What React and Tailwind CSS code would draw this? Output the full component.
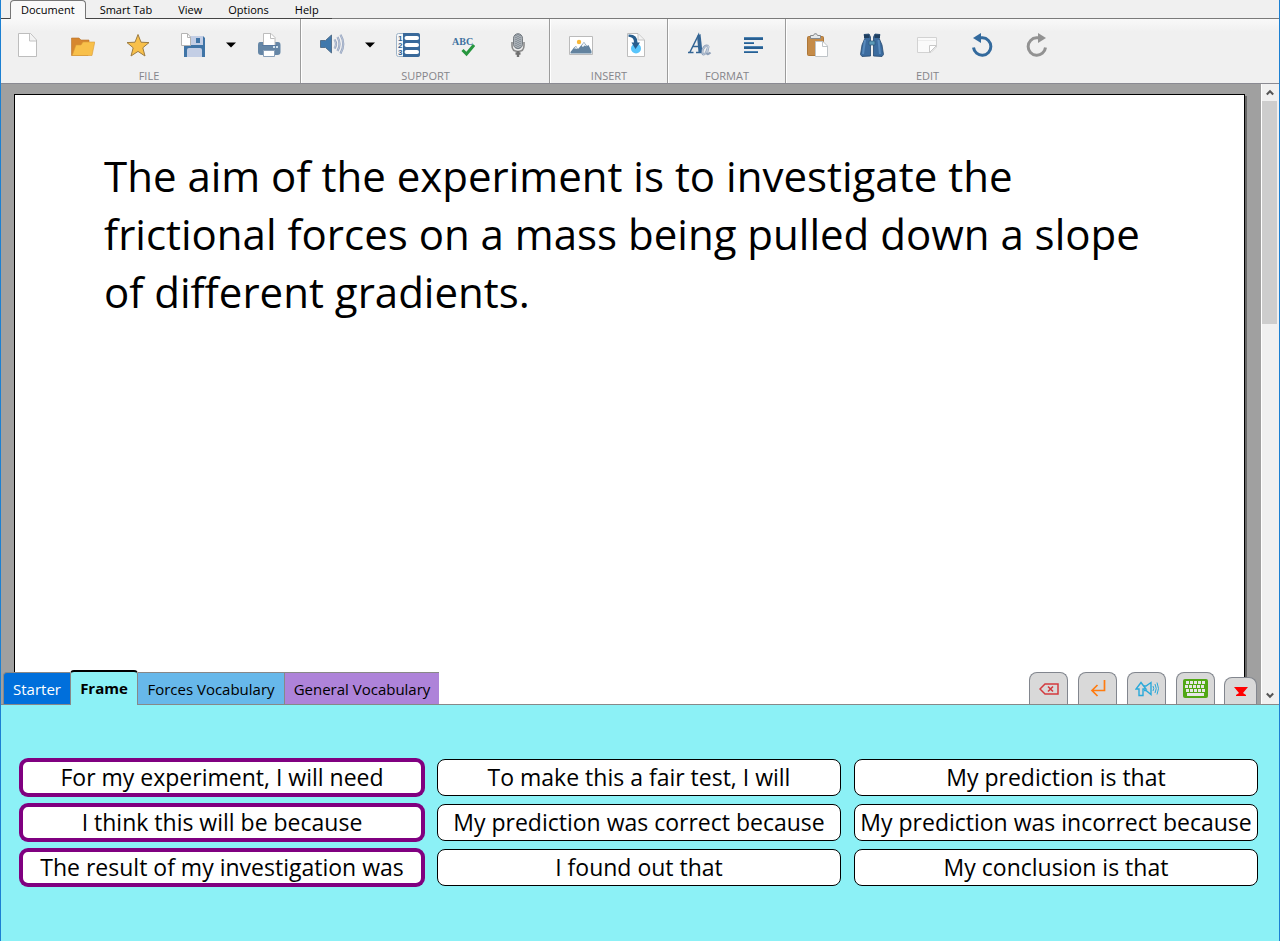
const menus = ["Smart Tab", "View", "Options", "Help"];

const Svg = ({ children }) => (
  <svg width="24" height="24" viewBox="0 0 24 24" aria-hidden="true" fill="none">{children}</svg>
);

const NewIcon = () => (
  <Svg>
    <path d="M2.5.5H14.5L20.5 7V23.5H2.5Z" fill="#fff" stroke="#bdbdbd" />
    <path d="M13.5 1V8H20" fill="#f2f2f2" stroke="#c4c4c4" />
  </Svg>
);
const OpenIcon = () => (
  <Svg>
    <path d="M.5 5H8L10 7H18V12L17 22.5H.5Z" fill="#d6872f" stroke="#b8722a" strokeWidth=".6" />
    <path d="M5 12H10L12 9H23.8L21 22.5H1.2Z" fill="#f8c04a" stroke="#d99a35" strokeWidth=".6" />
  </Svg>
);
const StarIcon = () => (
  <Svg>
    <path d="M12 1.5L15 9.2L23 9.6L16.8 14.8L19 23L12 18.4L5 23L7.2 14.8L1 9.6L9 9.2Z" fill="#f8c04a" stroke="#9d7c42" strokeLinejoin="round" />
  </Svg>
);
const SaveIcon = () => (
  <Svg>
    <path d="M3 3H22L24 5V24H3Z" fill="#3f74a6" />
    <path d="M9 3H22V12H9Z" fill="#c3cee5" />
    <path d="M15 5H19V10H15Z" fill="#3f74a6" />
    <path d="M6 24V17Q6 15 8 15H19Q21 15 21 17V24Z" fill="#c3cee5" />
    <path d="M.5.5H6.5L9.5 4V12.5H.5Z" fill="#fff" stroke="#b4b4b4" />
    <path d="M6.5 1V4.5H9.5" stroke="#b4b4b4" />
  </Svg>
);
const PrintIcon = () => (
  <Svg>
    <path d="M3 9H21Q23.5 9 23.5 12V19Q23.5 22 20.5 22H4Q1 22 1 19V12Q1 9 3 9Z" fill="#6586a6" />
    <path d="M6.5 12.5V.5H14L18 4.5V12.5Z" fill="#fff" stroke="#bcbcbc" />
    <path d="M13.5 1V5.500H17.5" stroke="#bcbcbc" />
    <path d="M5 12.5H20" stroke="#5879a0" />
    <path d="M6.5 17.5H17.5V23.5H6.5Z" fill="#fff" stroke="#8aa0b8" />
    <path d="M16 13H18V15H16ZM19 13H21V15H19Z" fill="#d2e2ee" />
  </Svg>
);
const SoundIcon = () => (
  <svg width="26" height="24" viewBox="0 0 26 24" aria-hidden="true" fill="none">
    <path d="M1.5 7.5H6.5L12.500 2V20L6.5 14.5H1.5Z" fill="#3f78ac" stroke="#54708c" />
    <path d="M15.500 6.5Q18.500 11 15.500 15.5M18.500 4Q22.500 11 18.500 18M21.500 1.8Q27 11 21.500 20.5" stroke="#94a2bd" strokeWidth="2.200" />
    <path d="M15.500 6.5Q18.500 11 15.500 15.5M18.500 4Q22.500 11 18.500 18M21.500 1.8Q27 11 21.500 20.5" stroke="#c4cede" strokeWidth=".8" />
  </svg>
);
const ListIcon = () => (
  <Svg>
    <rect x=".5" y=".5" width="23" height="23" rx="2" fill="#f4f7f9" stroke="#9fb4c8" />
    <path d="M7 0H22Q24 0 24 2V22Q24 24 22 24H7Z" fill="#39699a" />
    <path d="M10.5 5H21M10.5 12H21M10.5 19H21" stroke="#fff" strokeWidth="4" strokeLinecap="round" />
    <g fill="#315f8e" fontFamily="Liberation Sans" fontSize="8" fontWeight="700">
      <text x="2" y="8">1</text><text x="2" y="15">2</text><text x="2" y="22">3</text>
    </g>
  </Svg>
);
const SpellIcon = () => (
  <Svg>
    <text x="1" y="12" fill="#40719f" fontFamily="Liberation Serif" fontSize="10" fontWeight="700">ABC</text>
    <path d="M11.500 17L15.500 21L23 12" stroke="#27963e" strokeWidth="3" />
  </Svg>
);
const MicIcon = () => (
  <Svg>
    <rect x="7.500" y=".7" width="9" height="15" rx="4.5" fill="#a9afb5" stroke="#747a80" />
    <path d="M10 2V15M12 1V16M14 2V15" stroke="#6f7a84" strokeDasharray="1 1" />
    <path d="M6 9V12.500Q6 18.500 12 18.500T18 12.500V9" stroke="#8a8a8a" strokeWidth="1.6" />
    <path d="M12 18V24M9.500 20.5H14.500" stroke="#707070" strokeWidth="2.4" />
  </Svg>
);
const PictureIcon = () => (
  <Svg>
    <path d="M.5 3.5H23.5V21.5H.5Z" fill="#fff" stroke="#bbb" />
    <circle cx="10" cy="9" r="2.2" fill="#f9b838" />
    <path d="M1.5 20.5V19L5 14.5L7 13L9 16L15 9L18 13L19.5 12L22.5 18V20.5Z" fill="#63839f" />
    <path d="M5 15.5L7 13.5L8.5 16L6.5 15.5ZM12.5 13L15 9.5L17.5 13.5L15.5 12.5L14 14Z" fill="#f4f8fb" />
  </Svg>
);
const InsertIcon = () => (
  <Svg>
    <path d="M3.5.5H14L20.5 7V23.5H3.5Z" fill="#fff" stroke="#bdbdbd" />
    <path d="M14 1V7H20" fill="#f2f2f2" stroke="#c4c4c4" />
    <circle cx="12" cy="15.5" r="5" fill="#58c5fb" />
    <path d="M4.5 1.5Q13.5 1 13.5 9.5H16L11.5 16L7.5 9.5H10Q10 4 4.5 3.8Z" fill="#285e8e" />
  </Svg>
);
const FontIcon = () => (
  <svg width="28" height="28" viewBox="0 0 28 28" aria-hidden="true" fill="none">
    <path d="M3 21.500H8.500M11 21.500H17.500M15 21L13.500 4L5 21M7.500 15.500H14" stroke="#346594" strokeWidth="1.500" />
    <path d="M12 5L15.500 3L17.500 21.500H13.500Z" fill="#346594" />
    <path d="M23.500 15Q20 13.500 18 18Q16.500 22.500 18.500 23.500Q21 23.500 23.500 15L22 22Q22 24.500 25.500 21.500" stroke="#8d9fb8" strokeWidth="2.200" />
    <path d="M23.500 15Q20 13.500 18 18Q16.500 22.500 18.500 23.500Q21 23.500 23.500 15L22 22" stroke="#ccd5e2" strokeWidth=".8" />
  </svg>
);
const AlignIcon = () => (
  <Svg>
    <path d="M2 4H21V7H2ZM2 9H12V11H2ZM2 13H21V16H2ZM2 18H16V20H2Z" fill="#285f91" />
    <path d="M2 4.500H21M2 9.500H12M2 13.500H21M2 18.500H16" stroke="#4c83b3" />
  </Svg>
);
const PasteIcon = () => (
  <Svg>
    <rect x="2.500" y="3.5" width="16" height="19" rx="1" fill="#c58b48" stroke="#ad7738" />
    <path d="M5.500 2.5H8.500L9.500 .8H11.500L12.500 2.5H15.500V5.500H5.500Z" fill="#e4e8ea" stroke="#86898c" />
    <path d="M10.5 8.5H18L22.5 13V23.5H10.5Z" fill="#fff" stroke="#bfc4c8" />
    <path d="M17.5 9V13.5H22" stroke="#bfc4c8" />
  </Svg>
);
const FindIcon = () => (
  <Svg>
    <path d="M4 1.5L9 1L10.5 4V23L2 23.5L.5 21.5L2 12L5 5Z" fill="#3c6c9f" stroke="#24486f" strokeWidth=".8" />
    <path d="M20 1.5L15 1L13.5 4V23L22 23.5L23.5 21.5L22 12L19 5Z" fill="#3c6c9f" stroke="#24486f" strokeWidth=".8" />
    <path d="M4 1.5H9.5V5H4ZM14.5 1.5H20V5H14.5Z" fill="#1f3f60" />
    <path d="M5 7L3 21M18.5 7L20 21" stroke="#588abc" strokeWidth="2" />
    <path d="M9 8H15V12H9Z" fill="#5c9ab7" stroke="#2c587c" strokeWidth=".7" />
  </Svg>
);
const NoteIcon = () => (
  <Svg>
    <path d="M2.5 4.5H21.5V14L16 19.5H2.5Z" fill="#fafafa" stroke="#d2d2d2" />
    <path d="M3 7.500H21" stroke="#ececec" />
    <path d="M14.5 19.5V12.5H21.5Z" fill="#fff" stroke="#c8c8c8" />
  </Svg>
);
const UndoIcon = () => (
  <Svg>
    <path d="M9 4.8H12.5A8.7 8.7 0 1 1 3.5 14.5" stroke="#336a9d" strokeWidth="3" />
    <path d="M11 0V10L3 5Z" fill="#336a9d" />
  </Svg>
);
const RedoIcon = () => (
  <Svg>
    <path d="M15 4.8H11.5A8.7 8.7 0 1 0 20.5 14.5" stroke="#929292" strokeWidth="3" />
    <path d="M13 0V10L21 5Z" fill="#929292" />
  </Svg>
);

const groups = [
  { label: "FILE", first: true, items: [["New", NewIcon], ["Open", OpenIcon], ["Favourites", StarIcon], ["Save", SaveIcon], ["Save options"], ["Print", PrintIcon]] },
  { label: "SUPPORT", items: [["Speak", SoundIcon], ["Speech options"], ["Word list", ListIcon], ["Spelling", SpellIcon], ["Dictate", MicIcon]] },
  { label: "INSERT", items: [["Picture", PictureIcon], ["Import", InsertIcon]] },
  { label: "FORMAT", items: [["Font", FontIcon], ["Align", AlignIcon]] },
  { label: "EDIT", last: true, items: [["Paste", PasteIcon], ["Find", FindIcon], ["Note", NoteIcon], ["Undo", UndoIcon], ["Redo", RedoIcon]] },
];

function ToolGroup({ group }) {
  return (
    <section
      aria-label={group.label}
      className={`flex flex-col pr-[3px] pt-1.5 ${group.first ? "" : "border-l border-l-white pl-[3px]"} ${group.last ? "" : "border-r border-r-[#9c9c9c]"}`}
    >
      <div className="flex h-10">
        {group.items.map(([name, Icon]) => (
          <button key={name} type="button" aria-label={name} className={`flex items-center justify-center pr-px ${Icon ? "w-[55px]" : "w-[21px]"}`}>
            {Icon ? <Icon /> : (
              <svg width="10" height="6" viewBox="0 0 10 6" aria-hidden="true"><path d="M0 .5H10L5 5.5Z" fill="#000" /></svg>
            )}
          </button>
        ))}
      </div>
      <span className="pt-1 text-center text-[11px] leading-[14px] text-[#85858a]">{group.label}</span>
    </section>
  );
}

const DeleteIcon = () => (
  <svg width="20" height="12" viewBox="0 0 20 12" fill="none" aria-hidden="true">
    <path d="M6 1H19V11H6L1 6Z" stroke="#d33a3e" strokeWidth="1.5" />
    <path d="M9 3.5L14 8.5M14 3.5L9 8.5" stroke="#d33a3e" strokeWidth="1.6" />
  </svg>
);
const EnterIcon = () => (
  <svg width="16" height="17" viewBox="0 0 16 17" fill="none" aria-hidden="true">
    <path d="M14.5 0V10.5H2M7.5 5L2 10.5L7.5 16" stroke="#ff7b0f" strokeWidth="1.7" />
  </svg>
);
const SpeakUpIcon = () => (
  <svg width="24" height="16" viewBox="0 0 24 16" fill="none" stroke="#2aa9da" strokeWidth="1.4" aria-hidden="true">
    <path d="M6 1.5L1 8H4V14.5H8V8H11Z" />
    <path d="M9 5H11L16 1.5V13.5L11 9.5H9" />
    <path d="M18 5Q19.5 7.5 18 10M20 3Q22.5 7.5 20 12M22 1.5Q25 7.5 22 13.5" strokeWidth="1" />
  </svg>
);
const KeyboardIcon = () => (
  <svg width="25" height="19" viewBox="0 0 25 19" fill="none" aria-hidden="true">
    <rect width="25" height="19" rx="2" fill="#51a815" />
    <path d="M3 3.5H22M2 7.500H21M3 11.500H22" stroke="#e7e7e7" strokeWidth="3" strokeDasharray="3 1" />
    <path d="M2 5.500H23M2 9.500H23" stroke="#51a815" />
    <path d="M4 15.500H21" stroke="#e7e7e7" strokeWidth="3" />
  </svg>
);
const CloseIcon = () => (
  <svg width="14" height="9" viewBox="0 0 14 9" aria-hidden="true"><path d="M0 0H14L9 6L12 8V9H2V8L5 6Z" fill="#f00" /></svg>
);

const actions = [["Delete", DeleteIcon], ["New line", EnterIcon], ["Speak", SpeakUpIcon], ["Keyboard", KeyboardIcon]];

const phrases = [
  ["For my experiment, I will need", true],
  ["To make this a fair test, I will"],
  ["My prediction is that"],
  ["I think this will be because", true],
  ["My prediction was correct because"],
  ["My prediction was incorrect because"],
  ["The result of my investigation was", true],
  ["I found out that"],
  ["My conclusion is that"],
];

export default function App() {
  return (
    <div className="flex min-h-screen flex-col border-x border-[#1c80d2] bg-[#f0f0f0] font-['Open_Sans','Noto_Sans',sans-serif] text-black">
      <nav className="flex h-[19px] text-[11px]">
        <span className="w-[9px] border-b border-[#444]" />
        <button type="button" className="rounded-t border border-b-0 border-[#777] bg-[#f9f9f9] px-[10px]">Document</button>
        <div className="flex border-b border-[#444] pl-px">
          {menus.map((m) => <button key={m} type="button" className="px-[13px] pt-0.5">{m}</button>)}
        </div>
        <span className="flex-1 border-b border-[#7a7a7a]" />
      </nav>

      <header className="flex border-b border-[#8a8a92] bg-linear-to-b from-[#f9f9f9] to-[#f0f0f0] to-20%">
        {groups.map((g) => <ToolGroup key={g.label} group={g} />)}
      </header>

      <main className="relative flex flex-1 bg-[#a0a0a0]">
        <div className="flex flex-1 overflow-hidden pl-[13px] pr-4 pt-[10px]">
          <article className="flex-1 border border-b-0 border-black bg-white pb-24 pl-[89px] pr-20 pt-[52px] shadow-[2px_2px_0_#666]">
            <p className="text-[42px] leading-[58px]">
              The aim of the experiment is to investigate the frictional forces on a mass being pulled down a slope of different gradients.
            </p>
          </article>
        </div>
        <div className="flex w-[18px] flex-col border-l border-white bg-[#f0f0f0] pr-0.5">
          <button type="button" aria-label="Scroll up" className="flex h-[17px] items-center justify-center">
            <svg width="8" height="7" viewBox="0 0 8 7" aria-hidden="true"><path d="M.8 5.5L4 2.2L7.2 5.5" fill="none" stroke="#555" strokeWidth="2" /></svg>
          </button>
          <div className="flex-1"><div className="h-[38%] bg-[#cdcdcd]" /></div>
          <button type="button" aria-label="Scroll down" className="flex h-[17px] items-center justify-center">
            <svg width="8" height="7" viewBox="0 0 8 7" aria-hidden="true"><path d="M.8 1.5L4 4.8L7.2 1.5" fill="none" stroke="#555" strokeWidth="2" /></svg>
          </button>
        </div>

        <div className="absolute inset-x-0 -bottom-px flex items-end justify-between pl-0.5 pr-[22px]">
          <div role="tablist" className="flex items-end text-[15px]">
            <button type="button" role="tab" aria-selected="false" className="mb-px h-8 w-[67px] rounded-tl border-l border-t border-[#888] bg-[#006fdb] pt-0.5 text-white">Starter</button>
            <button type="button" role="tab" aria-selected="true" className="h-[35px] w-[68px] rounded-t border-x border-t-2 border-x-[#888] border-t-black bg-[#8cf1f6] font-bold">Frame</button>
            <button type="button" role="tab" aria-selected="false" className="mb-px h-8 w-[147px] border-r border-t border-[#888] bg-[#67b8ea] pt-0.5">Forces Vocabulary</button>
            <button type="button" role="tab" aria-selected="false" className="mb-px h-8 w-[154px] border-t border-[#888] bg-[#ae83d9] pt-0.5">General Vocabulary</button>
          </div>
          <div className="mb-px flex items-end gap-[9px]">
            <div className="flex gap-[10px]">
              {actions.map(([name, Icon]) => (
                <button key={name} type="button" aria-label={name} className="flex h-8 w-[39px] items-center justify-center rounded-t-lg border border-b-0 border-[#82868e] bg-[#d9d9d9]"><Icon /></button>
              ))}
            </div>
            <button type="button" aria-label="Close panel" className="flex h-[27px] w-[33px] items-center justify-center rounded-t-lg border border-b-0 border-[#82868e] bg-[#d9d9d9]"><CloseIcon /></button>
          </div>
        </div>
      </main>

      <section aria-label="Phrases" className="grid grid-cols-3 gap-x-[13px] gap-y-2 border-t border-[#888] bg-[#8cf1f6] pb-[55px] pl-[19px] pr-[21px] pt-[54px]">
        {phrases.map(([text, marked]) => (
          <button
            key={text}
            type="button"
            className={`flex h-[37px] items-center justify-center whitespace-nowrap rounded-lg bg-white text-[23px] leading-none ${marked ? "border-[3px] border-[#800080] ring-1 ring-[#800080]" : "border border-black"}`}
          >
            {text}
          </button>
        ))}
      </section>
    </div>
  );
}
